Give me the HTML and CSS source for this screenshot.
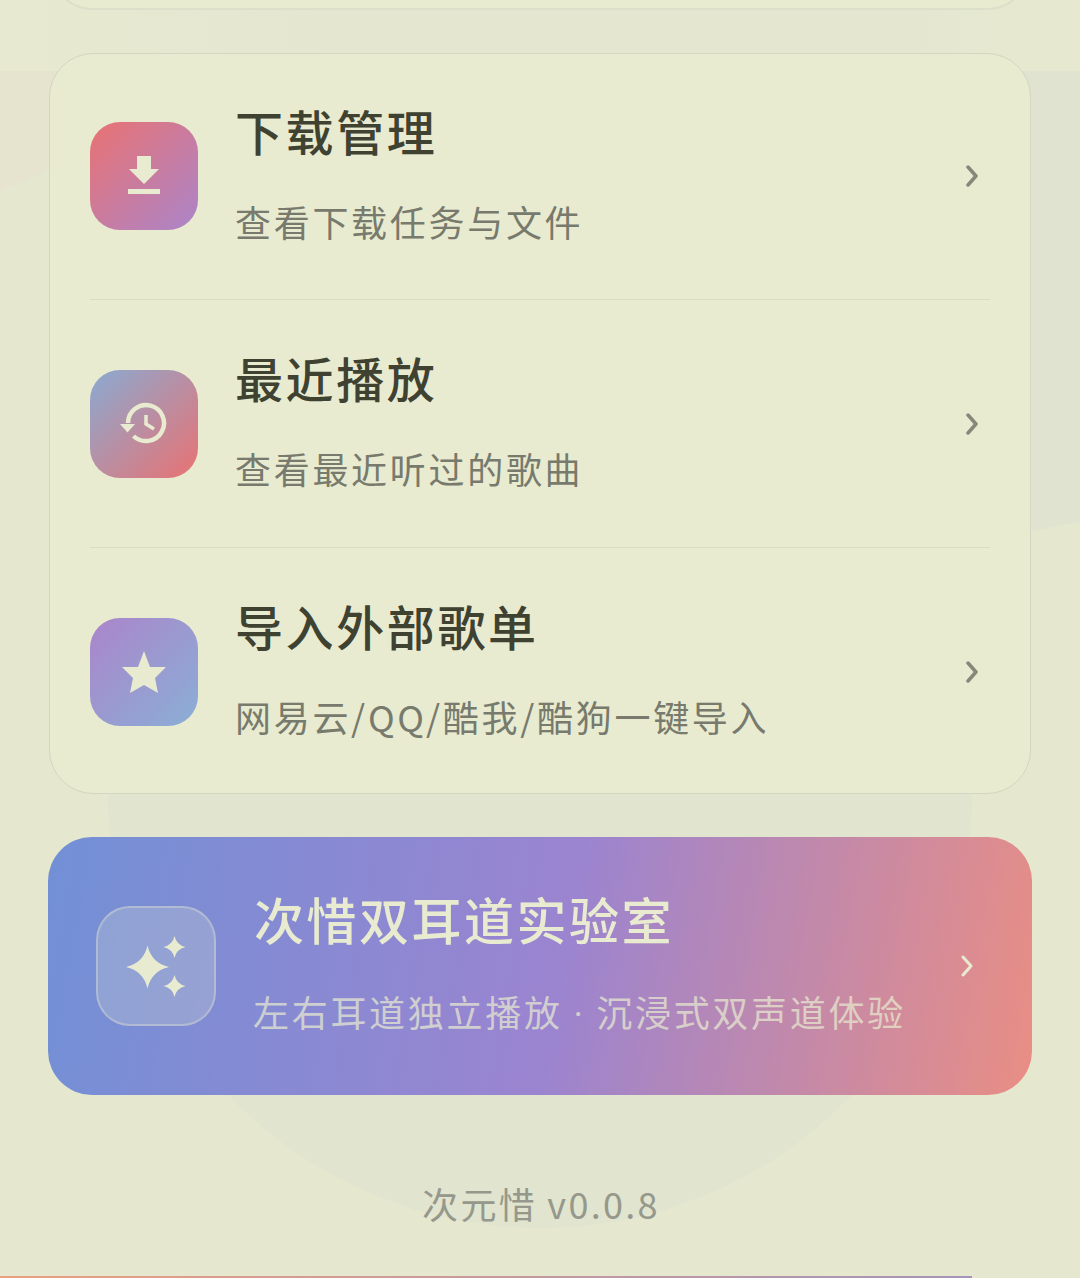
FILE: index.html
```html
<!DOCTYPE html>
<html lang="zh-CN">
<head>
  <meta charset="UTF-8" />
  <meta name="viewport" content="width=device-width, initial-scale=1.0" />
  <title>次元惜</title>
  <link rel="stylesheet" href="styles.css">
</head>
<body>
  <div class="screen">
    <div class="blob blob-top"></div>
    <div class="blob blob-left"></div>
    <div class="blob blob-right"></div>
    <div class="blob blob-circle"></div>

    <div class="content">
      <div class="card-prev"></div>

      <div class="card">
        <div class="row">
          <div class="icon icon-download">
            <svg width="40" height="40" viewBox="0 0 40 40"><path d="M13 0h14v13h8L20 28 5 13h8z"/><rect x="4" y="33" width="32" height="5"/></svg>
          </div>
          <div class="text">
            <div class="title">下载管理</div>
            <div class="sub">查看下载任务与文件</div>
          </div>
          <svg class="arrow" width="14" height="22" viewBox="0 0 14 22"><path d="M3 2l8 9-8 9"/></svg>
        </div>
        <div class="row">
          <div class="icon icon-history">
            <svg width="48" height="44" viewBox="0 0 48 44"><path class="line" d="M8 21a18 18 0 1 1 5.500 13"/><path d="M0 22h15l-7.500 8.500z"/><path class="line thin" d="M26 13v9l8 5"/></svg>
          </div>
          <div class="text">
            <div class="title">最近播放</div>
            <div class="sub">查看最近听过的歌曲</div>
          </div>
          <svg class="arrow" width="14" height="22" viewBox="0 0 14 22"><path d="M3 2l8 9-8 9"/></svg>
        </div>
        <div class="row">
          <div class="icon icon-star">
            <svg width="44" height="42" viewBox="0 0 44 42"><path d="M22 0l6 16h16L33 27l3 15-14-8-14 8 3-15L0 16h16z"/></svg>
          </div>
          <div class="text">
            <div class="title">导入外部歌单</div>
            <div class="sub">网易云/QQ/酷我/酷狗一键导入</div>
          </div>
          <svg class="arrow" width="14" height="22" viewBox="0 0 14 22"><path d="M3 2l8 9-8 9"/></svg>
        </div>
      </div>

      <div class="banner">
        <div class="banner-icon">
          <svg width="62" height="62" viewBox="0 0 62 62"><path d="M22.500 10.500Q26.500 28 44 32 26.500 36 22.500 53.500 18.500 36 1 32 18.500 28 22.500 10.500z"/><path d="M49.500 1Q51.500 10 60.500 12 51.500 14 49.500 23 47.500 14 38.500 12 47.500 10 49.500 1z"/><path d="M49.500 40Q51.500 49 60.500 51 51.500 53 49.500 62 47.500 53 38.500 51 47.500 49 49.500 40z"/></svg>
        </div>
        <div class="text">
          <div class="banner-title">次惜双耳道实验室</div>
          <div class="banner-sub">左右耳道独立播放 <span class="dot">·</span> 沉浸式双声道体验</div>
        </div>
        <svg class="arrow arrow-light" width="14" height="22" viewBox="0 0 14 22"><path d="M3 2l8 9-8 9"/></svg>
      </div>

      <div class="version">次元惜 v0.0.8</div>
    </div>

    <div class="bottom-line"></div>
  </div>
</body>
</html>
```

FILE: styles.css
```css
body {
  margin: 0;
  font-family: "Noto Sans CJK SC", "Noto Sans", sans-serif;
  background-color: #e5e8cf;
}
.screen {
  position: relative;
  width: 1080px;
  height: 1278px;
  overflow: hidden;
}
.blob {
  position: absolute;
}
.blob-top {
  left: 0;
  top: 0;
  width: 1080px;
  height: 71px;
  background: linear-gradient(90deg, #e7ead0 0%, #e4e6d0 30%, #e4e6d0 85%, #e6e9d0 92%);
}
.blob-left {
  left: 0;
  top: 71px;
  width: 200px;
  height: 120px;
  background: #e6e4cf;
  clip-path: polygon(0 0, 100% 0, 100% 30%, 0 100%);
}
.blob-right {
  left: 760px;
  top: 71px;
  width: 320px;
  height: 460px;
  background: #e0e3cf;
  clip-path: polygon(0 0, 100% 0, 100% 98%, 85% 100%, 0 100%);
}
.blob-circle {
  left: 108px;
  top: 364px;
  width: 864px;
  height: 864px;
  border-radius: 50%;
  background: #e1e4cf;
}
.content {
  position: relative;
  display: flex;
  flex-direction: column;
  align-items: center;
}
.card-prev {
  width: 982px;
  height: 100px;
  margin-top: -90px;
  border: 2px solid #dcdfc9;
  border-radius: 44px;
  background: #e8ebd0;
  box-sizing: border-box;
}
.card {
  width: 982px;
  height: 741px;
  margin-top: 43px;
  border: 1px solid #d3d6c1;
  border-radius: 44px;
  background: #e8ebd0;
  padding: 0 40px;
  box-sizing: border-box;
}
.row {
  display: flex;
  align-items: center;
  height: 247px;
  border-bottom: 1px solid #d9dcc6;
  box-sizing: content-box;
}
.row:first-child {
  height: 243px;
  padding-bottom: 2px;
}
.row:last-child {
  height: 242px;
  padding-top: 3px;
  border-bottom: none;
}
.icon {
  width: 108px;
  height: 108px;
  border-radius: 30px;
  display: flex;
  align-items: center;
  justify-content: center;
  flex-shrink: 0;
}
.icon svg, .banner-icon svg {
  fill: #e8ebd0;
}
.icon .line {
  fill: none;
  stroke: #e8ebd0;
  stroke-width: 4.500;
}
.icon .thin {
  stroke-width: 3.500;
}
.icon-download {
  background: linear-gradient(135deg, #e97272, #ab85ca);
}
.icon-history {
  background: linear-gradient(135deg, #8aaad2, #e97272);
}
.icon-star {
  background: linear-gradient(135deg, #ab85ca, #8aaed6);
}
.text {
  flex: 1;
  min-width: 0;
  margin-left: 37px;
  padding-bottom: 11px;
}
.row:first-child .text {
  padding-bottom: 9px;
}
.title {
  font-size: 48px;
  line-height: 60px;
  font-weight: 500;
  letter-spacing: 2.600px;
  color: #3f4230;
}
.sub {
  margin-top: 39px;
  font-size: 36px;
  line-height: 44px;
  letter-spacing: 2.700px;
  color: #777a6c;
}
.arrow {
  flex-shrink: 0;
  margin-right: 11px;
  fill: none;
  stroke: #85887a;
  stroke-width: 3.500;
  stroke-linecap: round;
  stroke-linejoin: round;
}
.banner {
  width: 984px;
  height: 258px;
  margin-top: 43px;
  border-radius: 44px;
  background: linear-gradient(100deg, #7290d6 0%, #9b84d0 52%, #e98e84 100%);
  display: flex;
  align-items: center;
  padding: 0 48px;
  box-sizing: border-box;
}
.banner-icon {
  width: 120px;
  height: 120px;
  border: 2px solid rgba(232, 235, 208, 0.35);
  border-radius: 34px;
  background: rgba(232, 235, 208, 0.22);
  display: flex;
  align-items: center;
  justify-content: center;
  box-sizing: border-box;
  flex-shrink: 0;
}
.banner .text {
  margin-left: 38px;
  padding-bottom: 8px;
}
.banner-title {
  font-size: 50px;
  line-height: 62px;
  font-weight: 500;
  letter-spacing: 2.500px;
  color: #e8ebd0;
}
.banner-sub {
  margin-top: 40px;
  margin-left: -1px;
  font-size: 36px;
  line-height: 44px;
  letter-spacing: 2.700px;
  color: rgba(232, 235, 208, 0.72);
}
.dot {
  font-family: "Roboto", sans-serif;
}
.arrow-light {
  margin-right: 10px;
  stroke: #e8ebd0;
  stroke-width: 3;
}
.version {
  margin-top: 84px;
  padding-left: 2px;
  font-size: 36px;
  line-height: 48px;
  letter-spacing: 2.300px;
  color: #95988a;
}
.bottom-line {
  position: absolute;
  left: 0;
  bottom: 0;
  width: 972px;
  height: 2px;
  background: linear-gradient(90deg, #e9a080, #a594b8);
}
```
